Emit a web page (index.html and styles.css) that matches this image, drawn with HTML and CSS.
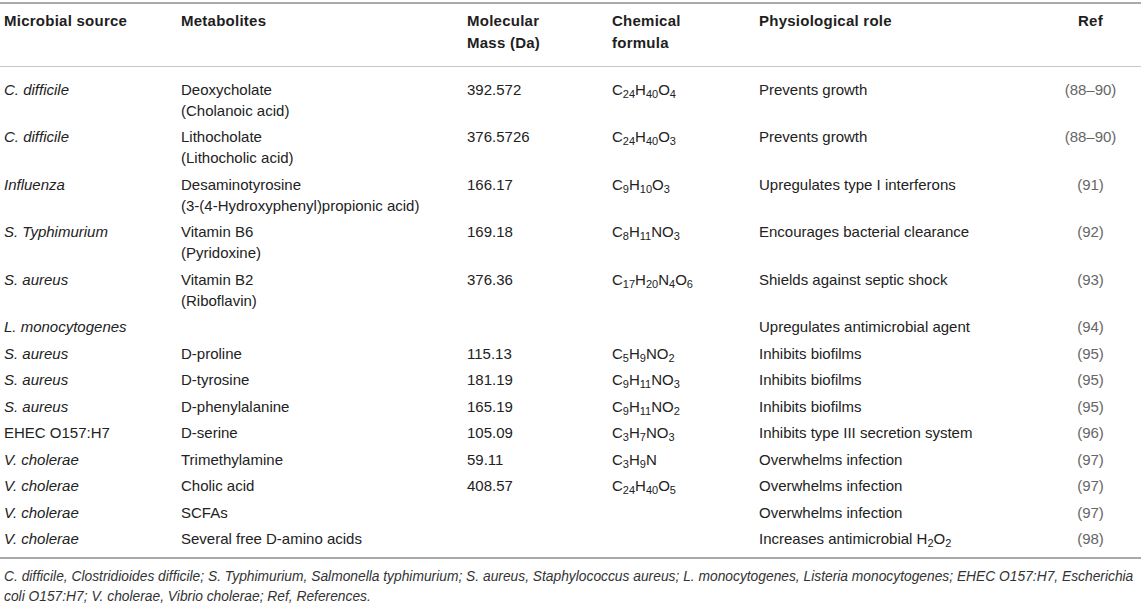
FILE: index.html
```html
<!DOCTYPE html>
<html lang="en">
<head>
<meta charset="utf-8">
<title>Microbial metabolites</title>
<link rel="stylesheet" href="styles.css">
</head>
<body>
<div class="page">
<table class="data">
<colgroup>
<col class="c1"><col class="c2"><col class="c3"><col class="c4"><col class="c5"><col class="c6">
</colgroup>
<thead>
<tr>
<th>Microbial source</th>
<th>Metabolites</th>
<th>Molecular<br>Mass (Da)</th>
<th>Chemical<br>formula</th>
<th>Physiological role</th>
<th class="ref">Ref</th>
</tr>
</thead>
<tbody>
<tr><td><i>C. difficile</i></td><td>Deoxycholate<br>(Cholanoic acid)</td><td>392.572</td><td>C<sub>24</sub>H<sub>40</sub>O<sub>4</sub></td><td>Prevents growth</td><td class="ref">(88–90)</td></tr>
<tr><td><i>C. difficile</i></td><td>Lithocholate<br>(Lithocholic acid)</td><td>376.5726</td><td>C<sub>24</sub>H<sub>40</sub>O<sub>3</sub></td><td>Prevents growth</td><td class="ref">(88–90)</td></tr>
<tr><td><i>Influenza</i></td><td>Desaminotyrosine<br>(3-(4-Hydroxyphenyl)propionic acid)</td><td>166.17</td><td>C<sub>9</sub>H<sub>10</sub>O<sub>3</sub></td><td>Upregulates type I interferons</td><td class="ref">(91)</td></tr>
<tr><td><i>S. Typhimurium</i></td><td>Vitamin B6<br>(Pyridoxine)</td><td>169.18</td><td>C<sub>8</sub>H<sub>11</sub>NO<sub>3</sub></td><td>Encourages bacterial clearance</td><td class="ref">(92)</td></tr>
<tr><td><i>S. aureus</i></td><td>Vitamin B2<br>(Riboflavin)</td><td>376.36</td><td>C<sub>17</sub>H<sub>20</sub>N<sub>4</sub>O<sub>6</sub></td><td>Shields against septic shock</td><td class="ref">(93)</td></tr>
<tr><td><i>L. monocytogenes</i></td><td></td><td></td><td></td><td>Upregulates antimicrobial agent</td><td class="ref">(94)</td></tr>
<tr><td><i>S. aureus</i></td><td>D-proline</td><td>115.13</td><td>C<sub>5</sub>H<sub>9</sub>NO<sub>2</sub></td><td>Inhibits biofilms</td><td class="ref">(95)</td></tr>
<tr><td><i>S. aureus</i></td><td>D-tyrosine</td><td>181.19</td><td>C<sub>9</sub>H<sub>11</sub>NO<sub>3</sub></td><td>Inhibits biofilms</td><td class="ref">(95)</td></tr>
<tr><td><i>S. aureus</i></td><td>D-phenylalanine</td><td>165.19</td><td>C<sub>9</sub>H<sub>11</sub>NO<sub>2</sub></td><td>Inhibits biofilms</td><td class="ref">(95)</td></tr>
<tr><td>EHEC O157:H7</td><td>D-serine</td><td>105.09</td><td>C<sub>3</sub>H<sub>7</sub>NO<sub>3</sub></td><td>Inhibits type III secretion system</td><td class="ref">(96)</td></tr>
<tr><td><i>V. cholerae</i></td><td>Trimethylamine</td><td>59.11</td><td>C<sub>3</sub>H<sub>9</sub>N</td><td>Overwhelms infection</td><td class="ref">(97)</td></tr>
<tr><td><i>V. cholerae</i></td><td>Cholic acid</td><td>408.57</td><td>C<sub>24</sub>H<sub>40</sub>O<sub>5</sub></td><td>Overwhelms infection</td><td class="ref">(97)</td></tr>
<tr><td><i>V. cholerae</i></td><td>SCFAs</td><td></td><td></td><td>Overwhelms infection</td><td class="ref">(97)</td></tr>
<tr><td><i>V. cholerae</i></td><td>Several free D-amino acids</td><td></td><td></td><td>Increases antimicrobial H<sub>2</sub>O<sub>2</sub></td><td class="ref">(98)</td></tr>
</tbody>
</table>
<p class="foot"><i>C. difficile, Clostridioides difficile; S. Typhimurium, Salmonella typhimurium; S. aureus, Staphylococcus aureus; L. monocytogenes, Listeria monocytogenes; EHEC O157:H7, Escherichia coli O157:H7; V. cholerae, Vibrio cholerae; Ref, References.</i></p>
</div>
</body>
</html>
```
FILE: styles.css
```css
html, body {
  margin: 0;
  padding: 0;
  background: #ffffff;
}
body {
  font-family: "Liberation Sans", Arial, Helvetica, sans-serif;
  color: #222222;
}
.page {
  width: 1141px;
  padding-top: 2px;
}
.data {
  width: 1141px;
  border-collapse: collapse;
  table-layout: fixed;
  font-size: 15px;
  line-height: 21px;
}
.c1 { width: 177px; }
.c2 { width: 286px; }
.c3 { width: 145px; }
.c4 { width: 147px; }
.c5 { width: 285px; }
.c6 { width: 101px; }

.data th {
  text-align: left;
  vertical-align: top;
  font-weight: bold;
  line-height: 22px;
  letter-spacing: 0.25px;
  padding: 6px 4px 12px;
  border-top: 2px solid #a9a9a9;
  border-bottom: 1px solid #c8c8c8;
  color: #1e1e1e;
}
.data td {
  vertical-align: top;
  padding: 3px 4px 2.5px;
  white-space: nowrap;
}
.data tbody tr:first-child td {
  padding-top: 11.5px;
}
.data tbody tr:last-child td {
  padding-bottom: 8px;
  border-bottom: 2px solid #a9a9a9;
}
.data .ref {
  text-align: center;
}
.data td.ref {
  color: #666666;
}
.data sub {
  font-size: 11px;
  line-height: 0;
  vertical-align: -3px;
}
.foot {
  margin: 8px 0 0;
  padding-left: 4px;
  font-size: 13.8px;
  line-height: 20px;
  color: #333333;
}
```
